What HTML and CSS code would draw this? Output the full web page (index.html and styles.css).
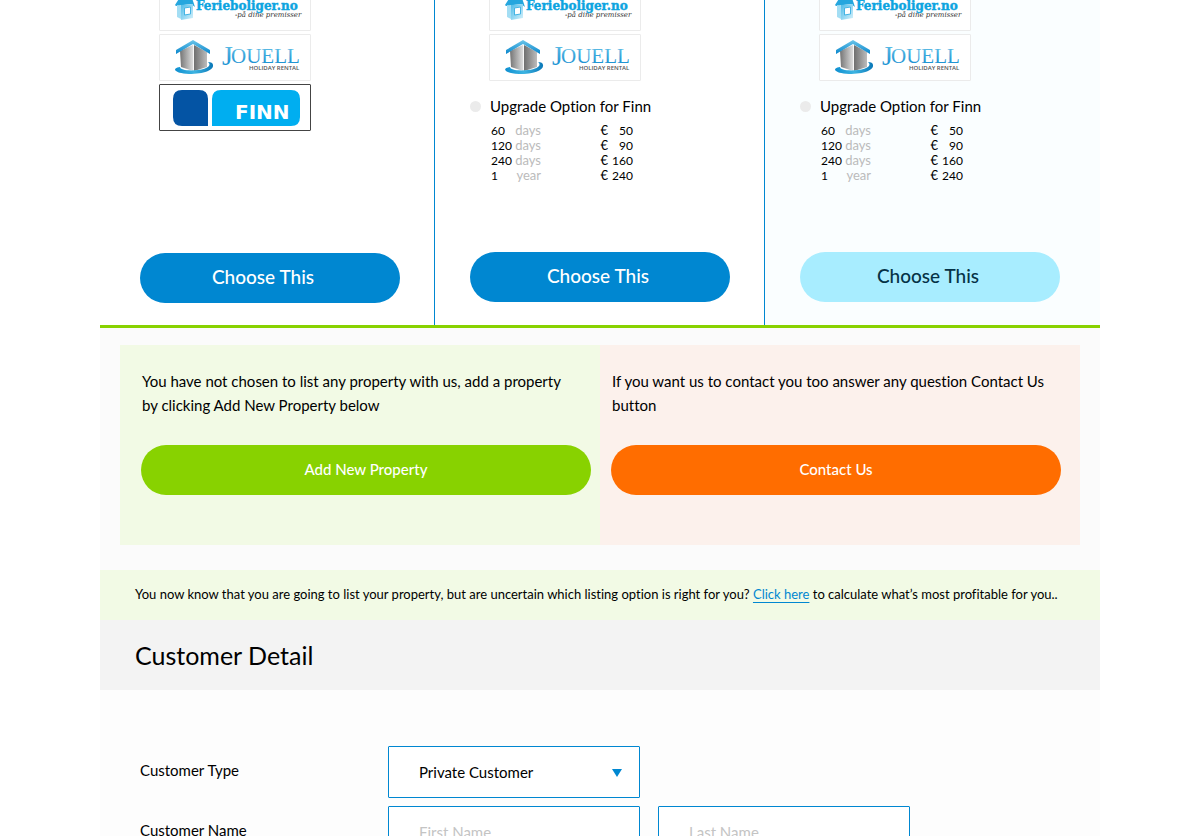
FILE: index.html
```html
<!DOCTYPE html>
<html lang="en">
<head>
<meta charset="utf-8">
<title>Listing options</title>
<link rel="stylesheet" href="styles.css">
</head>
<body>
<svg class="defs" aria-hidden="true">
  <defs>
    <linearGradient id="sky" x1="0" y1="0" x2="0" y2="1"><stop offset="0" stop-color="#6cc6ea"/><stop offset="1" stop-color="#0a86cc"/></linearGradient>
    <linearGradient id="ring" x1="0" y1="0" x2="1" y2="0"><stop offset="0" stop-color="#0e8fd0"/><stop offset=".5" stop-color="#3db4e2"/><stop offset="1" stop-color="#0a78b8"/></linearGradient>
    <linearGradient id="wallL" x1="0" y1="0" x2="1" y2="0"><stop offset="0" stop-color="#757575"/><stop offset="1" stop-color="#dcdcdc"/></linearGradient>
    <linearGradient id="wallR" x1="0" y1="0" x2="1" y2="0"><stop offset="0" stop-color="#6f6f6f"/><stop offset="1" stop-color="#bcbcbc"/></linearGradient>
    <linearGradient id="pane" x1="0" y1="0" x2="1" y2="1"><stop offset="0" stop-color="#4dbbe8"/><stop offset="1" stop-color="#d5f1fb"/></linearGradient>
    <symbol id="ferie" viewBox="0 0 150 45">
      <path d="M15 20 22 9l10 4 3 9-4-3-15 2z" fill="#25a6de"/>
      <path d="M17 20l4 1v13l-4-2z" fill="#a4def4"/>
      <path d="M21 20l12-1v14l-12 2z" fill="url(#pane)"/>
      <path d="M24.500 23l6-1v7l-6 1z" fill="#fff" stroke="#45b4e4"/>
      <text class="ferie-name" x="36" y="25">Ferieboliger.no</text>
      <text class="ferie-tag" x="75" y="32">-på dine premisser</text>
    </symbol>
    <symbol id="jouell" viewBox="0 0 150 45">
      <path d="M20 16l13-6v26l-12-4z" fill="url(#wallL)"/>
      <path d="M34 10l13 7v15l-13 4z" fill="url(#wallR)"/>
      <path d="M33.500 11v25" stroke="#f6f6f6" fill="none"/>
      <path d="M16 15 33 5l17 10v4L33 9 16 19z" fill="url(#sky)"/>
      <path d="M20 32c-8 1-7 6 9 7 15 0 25-4 24-9 0-2-2-3-5-3 4 3 0 7-10 8-9 1-18 0-18-3z" fill="url(#ring)"/>
      <text class="jouell-j" x="62" y="30">J</text>
      <text class="jouell-name" x="71" y="28">OUELL</text>
      <text class="jouell-tag" x="89" y="35">HOLIDAY RENTAL</text>
    </symbol>
    <symbol id="finn" viewBox="0 0 150 45">
      <path d="M22 5h17q9 0 9 9v27H22q-9 0-9-9V14q0-9 9-9z" fill="#0454a4"/>
      <path d="M61 5h70q9 0 9 9v18q0 9-9 9H52V14q0-9 9-9z" fill="#00aef0"/>
      <text class="finn-name" x="75" y="34">FINN</text>
    </symbol>
  </defs>
</svg>

<main class="page">
  <section class="plans">
    <article class="plan plan-first">
      <div class="logos">
        <svg class="logo" role="img" aria-label="Ferieboliger.no" viewBox="0 0 150 45"><use href="#ferie"/></svg>
        <svg class="logo" role="img" aria-label="Jouell Holiday Rental" viewBox="0 0 150 45"><use href="#jouell"/></svg>
        <svg class="logo logo-active" role="img" aria-label="Finn" viewBox="0 0 150 45"><use href="#finn"/></svg>
      </div>
      <button class="btn btn-choose">Choose This</button>
    </article>
    <article class="plan">
      <div class="logos">
        <svg class="logo" role="img" aria-label="Ferieboliger.no" viewBox="0 0 150 45"><use href="#ferie"/></svg>
        <svg class="logo" role="img" aria-label="Jouell Holiday Rental" viewBox="0 0 150 45"><use href="#jouell"/></svg>
      </div>
      <label class="upgrade"><input type="radio" name="upgrade-standard">Upgrade Option for Finn</label>
      <table class="prices">
        <tr><td>60</td><td class="unit">days</td><td class="cur">€</td><td class="amt">50</td></tr>
        <tr><td>120</td><td class="unit">days</td><td class="cur">€</td><td class="amt">90</td></tr>
        <tr><td>240</td><td class="unit">days</td><td class="cur">€</td><td class="amt">160</td></tr>
        <tr><td>1</td><td class="unit">year</td><td class="cur">€</td><td class="amt">240</td></tr>
      </table>
      <button class="btn btn-choose">Choose This</button>
    </article>
    <article class="plan plan-last">
      <div class="logos">
        <svg class="logo" role="img" aria-label="Ferieboliger.no" viewBox="0 0 150 45"><use href="#ferie"/></svg>
        <svg class="logo" role="img" aria-label="Jouell Holiday Rental" viewBox="0 0 150 45"><use href="#jouell"/></svg>
      </div>
      <label class="upgrade"><input type="radio" name="upgrade-premium">Upgrade Option for Finn</label>
      <table class="prices">
        <tr><td>60</td><td class="unit">days</td><td class="cur">€</td><td class="amt">50</td></tr>
        <tr><td>120</td><td class="unit">days</td><td class="cur">€</td><td class="amt">90</td></tr>
        <tr><td>240</td><td class="unit">days</td><td class="cur">€</td><td class="amt">160</td></tr>
        <tr><td>1</td><td class="unit">year</td><td class="cur">€</td><td class="amt">240</td></tr>
      </table>
      <button class="btn btn-choose btn-light">Choose This</button>
    </article>
  </section>

  <section class="actions">
    <div class="panel panel-add">
      <p>You have not chosen to list any property with us, add a property by clicking Add New Property below</p>
      <button class="btn btn-add">Add New Property</button>
    </div>
    <div class="panel panel-contact">
      <p>If you want us to contact you too answer any question Contact Us button</p>
      <button class="btn btn-contact">Contact Us</button>
    </div>
  </section>

  <p class="notice">You now know that you are going to list your property, but are uncertain which listing option is right for you? <a href="#calculate">Click here</a> to calculate what’s most profitable for you..</p>

  <h2 class="heading">Customer Detail</h2>

  <form class="details">
    <label for="type">Customer Type</label>
    <div class="select">
      <select id="type"><option>Private Customer</option><option>Company</option></select>
      <svg class="arrow" viewBox="0 0 10 8" aria-hidden="true"><path d="M0 0h10L5 8z"/></svg>
    </div>
    <label class="row-start" for="first">Customer Name</label>
    <input id="first" type="text" placeholder="First Name">
    <input type="text" placeholder="Last Name" aria-label="Last Name">
  </form>
</main>
</body>
</html>
```
FILE: styles.css
```css
* { box-sizing: border-box; }

body {
  margin: 0;
  height: 100vh;
  overflow: hidden;
  background: #fff;
  color: #000;
  font: 15px/24px Lato, sans-serif;
  font-variant-ligatures: none;
}

p, h2 { margin: 0; }

.defs { position: absolute; width: 0; height: 0; }

.page { max-width: 1000px; margin: 0 auto; }

/* Plans */
.plans {
  display: grid;
  grid-template-columns: 335fr 330fr 335fr;
  border-bottom: 3px solid #88d200;
}
.plan {
  display: flex;
  flex-direction: column;
  align-items: flex-start;
  padding: 0 33px 22px 35px;
  border-right: 1px solid #0087d1;
}
.plan-first { padding-left: 40px; }
.plan-last { border-right: 0; background: #fafeff; }

.logos {
  display: grid;
  gap: 3px;
  margin: -16px 0 0 19px;
}
.logo {
  display: block;
  width: 152px;
  height: 47px;
  border: 1px solid #ebebeb;
  border-radius: 1px;
  background: #fff;
}
.logo-active { border-color: #444; }

.ferie-name { font: bold 12px "DejaVu Serif", serif; fill: #0da4e0; stroke: #0da4e0; stroke-width: 0.4; }
.ferie-tag { font: italic 7px "DejaVu Serif", serif; fill: #333; }
.jouell-j { font: 28px "Liberation Serif", serif; fill: url(#sky); }
.jouell-name { font: 21px "Liberation Serif", serif; fill: url(#sky); }
.jouell-tag { font: 600 6px "Open Sans", sans-serif; fill: #555; }
.finn-name { font: bold 20px "DejaVu Sans", sans-serif; fill: #fff; }

.upgrade {
  display: flex;
  align-items: center;
  gap: 9px;
  margin-top: 13px;
}
.upgrade input {
  appearance: none;
  width: 11px;
  height: 11px;
  margin: 0;
  border-radius: 50%;
  background: #ebebeb;
}

.prices {
  width: 142px;
  margin: 5px 0 0 21px;
  border-collapse: collapse;
  table-layout: fixed;
  font-size: 12px;
  line-height: 15px;
}
.prices td { width: 22px; height: 15px; padding: 0; }
.prices .unit { width: 28px; color: #bbb; font-size: 13px; text-align: right; }
.prices .cur { width: 67px; font-size: 13px; text-align: right; }
.prices .amt { width: 25px; text-align: right; }

/* Buttons */
.btn {
  height: 50px;
  padding: 0 0 2px;
  border: 0;
  border-radius: 25px;
  color: #fff;
  font: 500 15px/24px Lato, sans-serif;
}
.btn-choose {
  width: 260px;
  margin-top: 69px;
  padding-right: 4px;
  background: #0087d1;
  font-size: 19px;
}
.plan-first .btn-choose { margin-top: 122px; padding-right: 14px; }
.btn-light { background: #a8edff; color: #053246; }
.btn-add { background: #88d200; }
.btn-contact { background: #ff6d00; }

/* Actions */
.actions {
  display: grid;
  grid-template-columns: 1fr 1fr;
  padding: 17px 20px 25px;
  background: #fbfbfb;
}
.panel {
  display: flex;
  flex-direction: column;
  gap: 28px;
  padding: 24px 9px 50px 21px;
}
.panel p { padding: 0 1px; }
.panel-add p { padding-right: 20px; }
.panel-add { background: #f2fae5; }
.panel-contact { padding-left: 11px; padding-right: 19px; background: #fcf1ec; }

/* Notice and heading */
.notice {
  padding: 12px 35px 14px;
  background: #f2fae5;
  font-size: 13px;
}
.notice a { color: #0087d1; text-underline-offset: 3px; }

.heading {
  padding: 19px 35px;
  background: #f3f3f3;
  font-size: 25px;
  font-weight: 400;
  line-height: 32px;
}

/* Form */
.details {
  display: grid;
  grid-template-columns: 230px 252px 252px;
  gap: 8px 18px;
  align-items: center;
  padding: 56px 40px;
  background: #fdfdfd;
}
.details label { padding-bottom: 5px; }
.row-start { grid-column: 1; }
.details input, .details select {
  width: 100%;
  height: 52px;
  padding: 0 30px;
  border: 1px solid #0087d1;
  border-radius: 1px;
  background: #fff;
  color: #000;
  font: 15px/24px Lato, sans-serif;
}
.details select { appearance: none; }
.details input::placeholder { color: #c4c4c4; }
.select { position: relative; }
.arrow {
  position: absolute;
  top: 23px;
  right: 18px;
  width: 10px;
  height: 8px;
  fill: #0087d1;
  pointer-events: none;
}
```
